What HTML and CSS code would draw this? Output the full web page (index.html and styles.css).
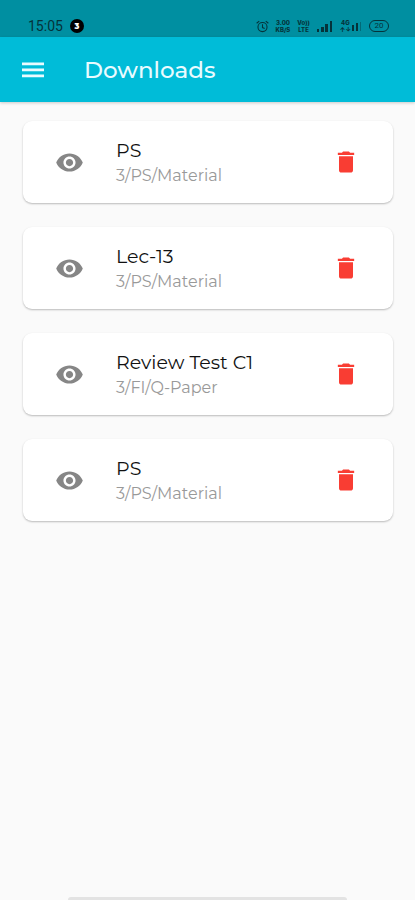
FILE: index.html
```html
<!DOCTYPE html>
<html lang="en">
<head>
<meta charset="utf-8">
<meta name="viewport" content="width=device-width, initial-scale=1">
<title>Downloads</title>
<link rel="stylesheet" href="styles.css">
</head>
<body>
<svg class="sprite" aria-hidden="true">
  <symbol id="eye" viewBox="0 0 24 24"><path d="M12 4.500C7 4.500 2.730 7.610 1 12c1.730 4.390 6 7.500 11 7.500s9.270-3.110 11-7.500c-1.730-4.390-6-7.500-11-7.500zM12 17c-2.760 0-5-2.240-5-5s2.240-5 5-5 5 2.240 5 5-2.240 5-5 5zm0-8c-1.660 0-3 1.340-3 3s1.340 3 3 3 3-1.340 3-3-1.340-3-3-3z"/></symbol>
  <symbol id="trash" viewBox="0 0 24 24"><path d="M6 19c0 1.100.9 2 2 2h8c1.100 0 2-.9 2-2V7H6v12zM19 4h-3.500l-1-1h-5l-1 1H5v2h14V4z"/></symbol>
</svg>
<div class="status">
  <div class="status-group">
    <span class="clock">15:05</span>
    <span class="badge">3</span>
  </div>
  <div class="status-group">
    <svg class="alarm" viewBox="0 0 12 12" aria-hidden="true"><circle cx="6" cy="6.500" r="4.200"/><path d="M6 4v3l2 .8M.6 3 3 1M11.400 3 9 1"/></svg>
    <span class="stack"><span>3.00</span><span>KB/S</span></span>
    <span class="stack"><span>Vo))</span><span>LTE</span></span>
    <svg class="bars" viewBox="0 0 16 12" aria-hidden="true"><path d="M0 9h2v3H0zM4 7h3v5H4zM8 4h3v8H8zM13 1h2v11h-2z"/></svg>
    <span class="network">
      <span class="stack"><span>4G</span><span>↑↓</span></span>
      <svg class="bars-small" viewBox="0 0 10 10" aria-hidden="true"><path d="M0 4h2v6H0zM4 2h2v8H4z"/><path opacity=".4" d="M8 1h1v9H8z"/></svg>
    </span>
    <span class="battery">20</span>
  </div>
</div>
<header class="bar">
  <button class="icon-button" type="button" aria-label="Menu">
    <svg class="menu" viewBox="0 0 22 16" aria-hidden="true"><path d="M0 .6h22v2.600H0zM0 6.600h22v2.600H0zM0 12.600h22v2.600H0z"/></svg>
  </button>
  <h1>Downloads</h1>
</header>
<main>
  <ul class="list">
    <li class="card">
      <button class="icon-button" type="button" aria-label="View PS"><svg class="eye"><use href="#eye"/></svg></button>
      <div class="text"><h2>PS</h2><p>3/PS/Material</p></div>
      <button class="icon-button" type="button" aria-label="Delete PS"><svg class="trash"><use href="#trash"/></svg></button>
    </li>
    <li class="card">
      <button class="icon-button" type="button" aria-label="View Lec-13"><svg class="eye"><use href="#eye"/></svg></button>
      <div class="text"><h2>Lec-13</h2><p>3/PS/Material</p></div>
      <button class="icon-button" type="button" aria-label="Delete Lec-13"><svg class="trash"><use href="#trash"/></svg></button>
    </li>
    <li class="card">
      <button class="icon-button" type="button" aria-label="View Review Test C1"><svg class="eye"><use href="#eye"/></svg></button>
      <div class="text"><h2>Review Test C1</h2><p>3/FI/Q-Paper</p></div>
      <button class="icon-button" type="button" aria-label="Delete Review Test C1"><svg class="trash"><use href="#trash"/></svg></button>
    </li>
    <li class="card">
      <button class="icon-button" type="button" aria-label="View PS"><svg class="eye"><use href="#eye"/></svg></button>
      <div class="text"><h2>PS</h2><p>3/PS/Material</p></div>
      <button class="icon-button" type="button" aria-label="Delete PS"><svg class="trash"><use href="#trash"/></svg></button>
    </li>
  </ul>
</main>
<div class="home-handle"></div>
</body>
</html>
```
FILE: styles.css
```css
* { box-sizing: border-box; }

body {
  margin: 0;
  min-height: 100vh;
  display: flex;
  flex-direction: column;
  background: #fafafa;
  font-family: Montserrat, Inter, sans-serif;
}

h1, h2, p, ul { margin: 0; padding: 0; }

svg { display: block; }

.sprite { position: absolute; width: 0; height: 0; }

.status {
  display: flex;
  justify-content: space-between;
  align-items: center;
  padding: 16px 26px 1px 28px;
  background: #008fa1;
  color: #05333a;
}

.status-group { display: flex; align-items: center; gap: 7px; height: 20px; }

.clock { font: 14px/20px Roboto, sans-serif; }

.badge {
  width: 14px;
  height: 14px;
  border-radius: 50%;
  background: #000;
  color: #fff;
  font-size: 8px;
  font-weight: 800;
  line-height: 14px;
  text-align: center;
}

.alarm { width: 13px; height: 13px; fill: none; stroke: currentColor; }

.stack {
  display: flex;
  flex-direction: column;
  align-items: center;
  font: 800 6px/7px Inter, sans-serif;
}

.bars { width: 16px; height: 12px; fill: currentColor; }

.network { display: flex; align-items: center; gap: 1px; }

.bars-small { width: 10px; height: 10px; fill: currentColor; }

.battery {
  width: 20px;
  height: 12px;
  border: 1px solid currentColor;
  border-radius: 6px;
  font: 8px/10px Roboto, sans-serif;
  text-align: center;
}

.bar {
  display: flex;
  align-items: center;
  gap: 40px;
  height: 65px;
  padding: 0 22px;
  background: #00bcd8;
  color: #e9fbff;
  box-shadow: 0 1px 3px rgba(0, 0, 0, 0.2);
}

.bar h1 { font-size: 23px; font-weight: 500; line-height: 32px; }

.icon-button {
  display: block;
  padding: 0;
  border: 0;
  background: none;
  color: inherit;
  cursor: pointer;
}

.menu { width: 22px; height: 16px; fill: currentColor; }

main { flex: 1; padding: 19px 22px 19px 23px; }

.list { display: grid; gap: 24px; list-style: none; }

.card {
  display: flex;
  align-items: center;
  padding: 15px 33px 15px 32px;
  border-radius: 9px;
  background: #fff;
  box-shadow: 0 1px 2px rgba(0, 0, 0, 0.26);
}

.text { flex: 1; min-width: 0; padding: 2px 32px 0; }

.text h2 { color: #111; font-size: 19px; font-weight: 400; line-height: 26px; }

.text p { color: #999; font-size: 16px; font-weight: 400; line-height: 24px; }

.eye { width: 29px; height: 29px; fill: #868686; }

.trash { width: 28px; height: 28px; fill: #f93d33; }

.home-handle {
  align-self: center;
  width: 67%;
  height: 3px;
  border-radius: 3px 3px 0 0;
  background: #e3e3e3;
}
```
